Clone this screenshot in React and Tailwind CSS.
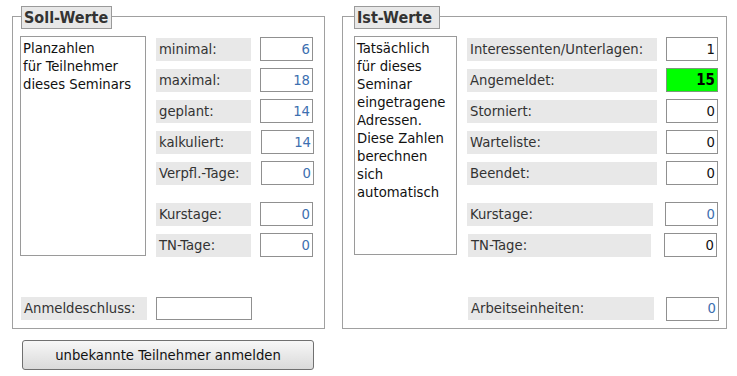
import React from "react";

const F = "font-['DejaVu_Sans_Condensed','DejaVu_Sans',sans-serif]";

function Row({ label, value, lw = 95, iw = 53, gap = 9, blue, green, ml = 0 }) {
  return (
    <div className="flex items-center h-[24px]">
      <div
        className="h-[23px] bg-[#e8e8e8] text-[#333] pl-[3px] flex items-center whitespace-nowrap"
        style={{ width: lw, marginLeft: ml }}
      >
        {label}
      </div>
      <div
        className={
          "h-[24px] border flex items-center justify-end pr-[2px] " +
          (green
            ? "bg-[#00ff00] border-[#7a9a7a] font-bold text-black text-[15px]"
            : "bg-white border-[#909090] " + (blue ? "text-[#3d6fb0]" : "text-[#111]"))
        }
        style={{ width: iw, marginLeft: gap }}
      >
        {value}
      </div>
    </div>
  );
}

export default function App() {
  return (
    <div className={"w-[737px] h-[376px] bg-white text-[14.7px] text-[#111] " + F}>
      <div className="flex gap-[17px] pl-[12px] pt-[16px]">
        {/* Soll-Werte */}
        <div className="w-[313px] h-[313px] border border-[#a0a0a0] flex flex-col">
          <div className="ml-[8px] -mt-[11px] w-[91px] h-[23px] border border-[#9a9a9a] bg-[#e8e8e8] font-bold text-[16px] text-[#333] pl-[2px] flex items-center">
            Soll-Werte
          </div>
          <div className="flex mt-[7px]">
            <div className="ml-[7px] w-[126px] h-[220px] border border-[#9a9a9a] pl-[2px] pt-[2px] leading-[18px] text-[#111]">
              Planzahlen
              <br />
              für Teilnehmer
              <br />
              dieses Seminars
            </div>
            <div className="ml-[10px] mt-[1px] flex flex-col gap-[7px]">
              <Row label="minimal:" value="6" blue />
              <Row label="maximal:" value="18" blue />
              <Row label="geplant:" value="14" blue />
              <Row label="kalkuliert:" value="14" blue gap={10} />
              <Row label="Verpfl.-Tage:" value="0" blue gap={10} />
              <div className="h-[3px]" />
              <Row label="Kurstage:" value="0" blue />
              <Row label="TN-Tage:" value="0" blue />
            </div>
          </div>
          <div className="mt-auto mb-[8px] ml-[8px] flex items-center h-[23px]">
            <div className="w-[126px] h-[23px] bg-[#e8e8e8] text-[#333] pl-[3px] flex items-center">
              Anmeldeschluss:
            </div>
            <div className="ml-[9px] w-[96px] h-[23px] border border-[#909090] bg-white" />
          </div>
        </div>

        {/* Ist-Werte */}
        <div className="w-[385px] h-[313px] border border-[#a0a0a0] flex flex-col">
          <div className="ml-[11px] -mt-[11px] w-[86px] h-[23px] border border-[#9a9a9a] bg-[#e8e8e8] font-bold text-[16px] text-[#333] pl-[2px] flex items-center">
            Ist-Werte
          </div>
          <div className="flex mt-[7px]">
            <div className="ml-[11px] w-[103px] h-[219px] border border-[#9a9a9a] pl-[2px] pt-[2px] leading-[18px] text-[#111]">
              Tatsächlich
              <br />
              für dieses
              <br />
              Seminar
              <br />
              eingetragene
              <br />
              Adressen.
              <br />
              Diese Zahlen
              <br />
              berechnen
              <br />
              sich
              <br />
              automatisch
            </div>
            <div className="ml-[10px] mt-[1px] flex flex-col gap-[7px]">
              <Row label="Interessenten/Unterlagen:" value="1" lw={190} iw={52} />
              <Row label="Angemeldet:" value="15" lw={190} iw={52} green />
              <Row label="Storniert:" value="0" lw={190} iw={52} />
              <Row label="Warteliste:" value="0" lw={190} iw={52} />
              <Row label="Beendet:" value="0" lw={190} iw={52} />
              <div className="h-[3px]" />
              <Row label="Kurstage:" value="0" lw={186} iw={53} gap={12} blue />
              <Row label="TN-Tage:" value="0" lw={183} iw={53} gap={13} ml={1} />
            </div>
          </div>
          <div className="mt-auto mb-[8px] ml-[125px] flex items-center h-[23px]">
            <div className="w-[186px] h-[23px] bg-[#e8e8e8] text-[#333] pl-[3px] flex items-center">
              Arbeitseinheiten:
            </div>
            <div className="ml-[12px] w-[53px] h-[24px] border border-[#909090] bg-white flex items-center justify-end pr-[2px] text-[#3d6fb0]">
              0
            </div>
          </div>
        </div>
      </div>

      <div className="pl-[22px] mt-[11px]">
        <button className="w-[292px] h-[30px] border border-[#707070] rounded-[3px] bg-gradient-to-b from-[#f7f7f7] to-[#dadada] text-[#111] text-[14.7px] flex items-center justify-center">
          unbekannte Teilnehmer anmelden
        </button>
      </div>
    </div>
  );
}
